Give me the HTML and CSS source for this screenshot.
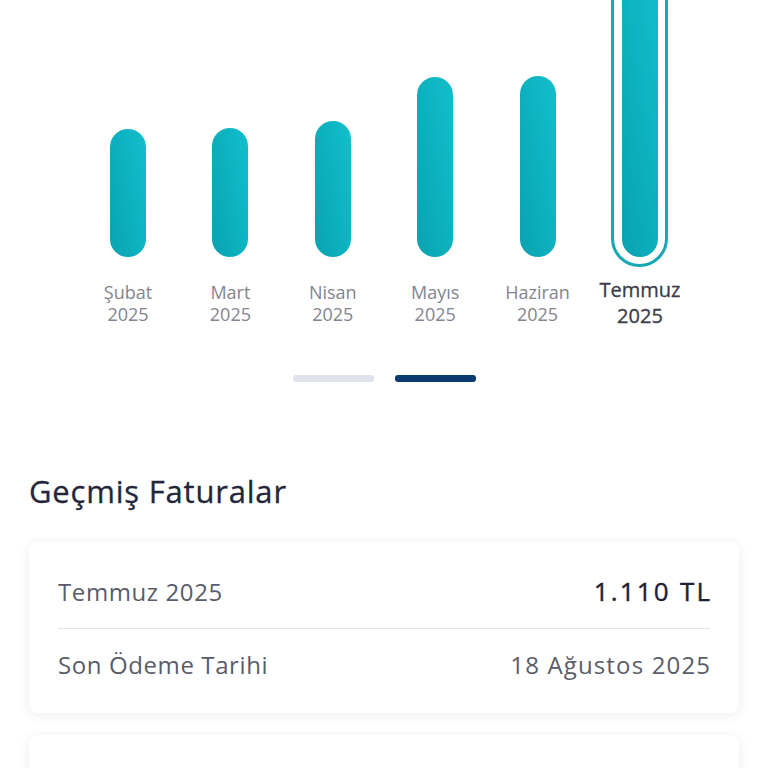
FILE: index.html
```html
<!DOCTYPE html>
<html lang="tr">
<head>
<meta charset="utf-8">
<title>Geçmiş Faturalar</title>
<link rel="stylesheet" href="styles.css">
</head>
<body>
  <section class="chart">
    <div class="col">
      <div class="bar-wrap"><div class="bar" style="height:128px"></div></div>
      <div class="label">Şubat<br>2025</div>
    </div>
    <div class="col">
      <div class="bar-wrap"><div class="bar" style="height:129px"></div></div>
      <div class="label">Mart<br>2025</div>
    </div>
    <div class="col">
      <div class="bar-wrap"><div class="bar" style="height:136px"></div></div>
      <div class="label">Nisan<br>2025</div>
    </div>
    <div class="col">
      <div class="bar-wrap"><div class="bar" style="height:180px"></div></div>
      <div class="label">Mayıs<br>2025</div>
    </div>
    <div class="col">
      <div class="bar-wrap"><div class="bar" style="height:181px"></div></div>
      <div class="label">Haziran<br>2025</div>
    </div>
    <div class="col selected">
      <div class="bar-wrap">
        <div class="ring"><div class="bar" style="height:300px"></div></div>
      </div>
      <div class="label">Temmuz<br>2025</div>
    </div>
  </section>

  <div class="pager">
    <span class="dot"></span>
    <span class="dot active"></span>
  </div>

  <main class="content">
    <h2 class="title">Geçmiş Faturalar</h2>
    <div class="card">
      <div class="row row-top">
        <span class="key">Temmuz 2025</span>
        <span class="amount">1.110 TL</span>
      </div>
      <div class="row row-bottom">
        <span class="key">Son Ödeme Tarihi</span>
        <span class="val">18 Ağustos 2025</span>
      </div>
    </div>
    <div class="card card-next"></div>
  </main>
</body>
</html>
```
FILE: styles.css
```css
* { box-sizing: border-box; }

html, body {
  margin: 0;
  padding: 0;
  background: #ffffff;
  font-family: "Open Sans", "Noto Sans", sans-serif;
  overflow: hidden;
}

.chart {
  display: flex;
  justify-content: center;
  height: 329px;
}

.col {
  flex: 0 0 102.4px;
  display: flex;
  flex-direction: column;
  align-items: center;
}

.bar-wrap {
  height: 267px;
  width: 100%;
  display: flex;
  align-items: flex-end;
  justify-content: center;
}

.bar {
  width: 36px;
  border-radius: 18px;
  background: linear-gradient(80deg, #0aa2b1 0%, #0db3c0 55%, #12bfca 100%);
  margin-bottom: 10.5px;
  flex: 0 0 auto;
}

.ring {
  border: 3px solid #16a8b5;
  border-radius: 29px;
  padding: 7.5px;
  flex: 0 0 auto;
}

.ring .bar {
  margin-bottom: 0;
}

.label {
  margin-top: 14px;
  font-size: 18px;
  line-height: 22px;
  color: #83848f;
  text-align: center;
}

.selected .label {
  margin-top: 9.5px;
  font-size: 20px;
  line-height: 26px;
  font-weight: 500;
  color: #3a3c48;
  -webkit-text-stroke: 0.3px #3a3c48;
}

.pager {
  display: flex;
  justify-content: center;
  gap: 21px;
  margin-top: 46px;
}

.dot {
  width: 81px;
  height: 7px;
  border-radius: 3px;
  background: #dfe2ea;
}

.dot.active {
  background: #0c3a70;
}

.content {
  padding: 0 29px;
}

.title {
  margin: 91px 0 33px;
  font-size: 31px;
  line-height: 36px;
  font-weight: 500;
  letter-spacing: 0.8px;
  color: #23263a;
  -webkit-text-stroke: 0.3px #23263a;
}

.card {
  background: #ffffff;
  border-radius: 8px;
  box-shadow: 0 2px 12px rgba(20, 30, 60, 0.08);
  padding: 0 29px;
  margin-bottom: 22px;
}

.card-next {
  height: 80px;
}

.row {
  display: flex;
  justify-content: space-between;
  align-items: baseline;
}

.row-top {
  padding: 33px 0 20px;
  border-bottom: 1.5px solid #e4e6ea;
}

.row-bottom {
  padding: 20px 0 32px;
}

.key,
.val {
  font-size: 24px;
  line-height: 32px;
  letter-spacing: 0.6px;
  color: #5a5c69;
}

.val {
  letter-spacing: 1.15px;
  margin-right: -1.15px;
}

.amount {
  font-size: 26px;
  line-height: 32px;
  font-weight: 500;
  letter-spacing: 2.2px;
  margin-right: -2.2px;
  color: #1f2235;
  -webkit-text-stroke: 0.4px #1f2235;
}
```
